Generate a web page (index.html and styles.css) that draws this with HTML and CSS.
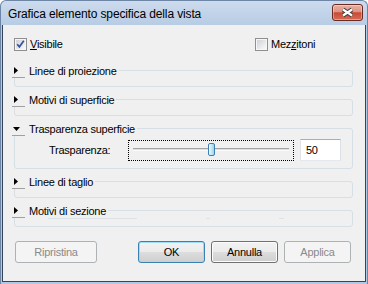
FILE: index.html
```html
<!DOCTYPE html>
<html lang="it">
<head>
    <meta charset="UTF-8">
    <meta name="viewport" content="width=device-width, initial-scale=1.0">
    <title>Grafica elemento specifica della vista</title>
    <link rel="stylesheet" href="styles.css">
</head>
<body>
<div class="window">
    <div class="titlebar">
        <span class="title">Grafica elemento specifica della vista</span>
        <button class="close">
            <svg width="29" height="15" viewBox="0 0 29 15">
                <path d="M10 4.5L19 10.5M19 4.5L10 10.5" stroke="#3b3b3b" stroke-width="4.2" fill="none"/>
                <path d="M10 4.5L19 10.5M19 4.5L10 10.5" stroke="#fff" stroke-width="2.2" fill="none"/>
            </svg>
        </button>
    </div>

    <div class="client">
        <div class="checks">
            <label class="chk">
                <span class="box"><svg width="11" height="11" viewBox="0 0 11 11"><path d="M2.2 5.2L4.4 7.8L8.8 1.8" stroke="#34519a" stroke-width="1.7" fill="none"/></svg></span>
                <span><u>V</u>isibile</span>
            </label>
            <label class="chk">
                <span class="box"></span>
                <span>Mez<u>z</u>itoni</span>
            </label>
        </div>

        <div class="group first">
            <div class="head">
                <span class="toggle"><svg width="4" height="7" viewBox="0 0 4 7"><path d="M0 0L4 3.5L0 7Z"/></svg></span>
                <span class="cap">Linee di proiezione</span>
            </div>
        </div>

        <div class="group">
            <div class="head">
                <span class="toggle"><svg width="4" height="7" viewBox="0 0 4 7"><path d="M0 0L4 3.5L0 7Z"/></svg></span>
                <span class="cap">Motivi di superficie</span>
            </div>
        </div>

        <div class="group open">
            <div class="head">
                <span class="toggle"><svg width="7" height="4" viewBox="0 0 7 4"><path d="M0 0H7L3.5 4Z"/></svg></span>
                <span class="cap">Trasparenza superficie</span>
            </div>
            <div class="row">
                <span class="lbl">Trasparenza:</span>
                <div class="slider">
                    <div class="track"></div>
                    <div class="thumb" style="left: 50%"></div>
                </div>
                <div class="num">50</div>
            </div>
        </div>

        <div class="group">
            <div class="head">
                <span class="toggle"><svg width="4" height="7" viewBox="0 0 4 7"><path d="M0 0L4 3.5L0 7Z"/></svg></span>
                <span class="cap">Linee di taglio</span>
            </div>
        </div>

        <div class="group last">
            <div class="head">
                <span class="toggle"><svg width="4" height="7" viewBox="0 0 4 7"><path d="M0 0L4 3.5L0 7Z"/></svg></span>
                <span class="cap">Motivi di sezione</span>
            </div>
            <div class="ghost">
                <span class="g1"></span>
                <span class="g2"></span>
                <span class="g3"></span>
            </div>
        </div>

        <div class="buttons">
            <button class="btn wide" disabled>Ripristina</button>
            <button class="btn default">OK</button>
            <button class="btn">Annulla</button>
            <button class="btn" disabled>Applica</button>
        </div>
    </div>
</div>
</body>
</html>
```

FILE: styles.css
```css
* {
    box-sizing: border-box;
}

body {
    margin: 0;
    background: #fff;
    font-family: "Liberation Sans", Arial, sans-serif;
    font-size: 11px;
    letter-spacing: -0.25px;
    color: #000;
}

.window {
    width: 368px;
    height: 284px;
    border: 1px solid #6d86a6;
    border-bottom: 0;
    border-radius: 6px 6px 0 0;
    background: linear-gradient(#cddbed, #b7cce5 24px, #b1c9e4);
    display: flex;
    flex-direction: column;
    overflow: hidden;
}

.titlebar {
    height: 24px;
    display: flex;
    justify-content: space-between;
    align-items: flex-start;
    padding: 0 4px 0 7px;
}

.title {
    font-size: 12px;
    line-height: 15px;
    letter-spacing: -0.13px;
    margin-top: 6px;
}

.close {
    width: 31px;
    height: 17px;
    margin-top: 3px;
    padding: 0;
    display: flex;
    border: 1px solid #6b2a22;
    border-radius: 3px;
    background: linear-gradient(#e9b1a4, #dc9383 45%, #c74b35 52%, #d56c57);
    box-shadow: inset 0 0 0 1px rgba(255, 255, 255, .35);
}

.client {
    margin: 0 1px 2px;
    height: 257px;
    border: 1px solid #33445c;
    border-top: 0;
    background: #f0f0f0;
    padding: 12px 12px 0 11px;
}

/* checkbox */
.checks {
    display: grid;
    grid-template-columns: 241px auto;
    height: 14px;
}

.chk {
    display: flex;
    align-items: center;
    gap: 3px;
    line-height: 14px;
}

.box {
    width: 13px;
    height: 13px;
    display: flex;
    border: 1px solid #8f8f8f;
    background: linear-gradient(135deg, #c9cdd3, #f7f7f7 85%);
    box-shadow: inset 0 0 0 1px #f6f6f6;
}

u {
    text-decoration: underline;
    text-underline-offset: 1px;
}

/* gruppi */
.group {
    border: 1px solid #d5dfe5;
    border-radius: 3px;
    margin-top: 12px;
    padding-bottom: 8px;
}

.group.first {
    margin-top: 19px;
}

.group.open {
    padding-bottom: 7px;
}

.group.last {
    padding-bottom: 7px;
}

.head {
    display: flex;
    height: 14px;
    margin: -7px 0 0 -3px;
}

.toggle {
    width: 13px;
    height: 14px;
    display: flex;
    align-items: center;
    padding-left: 2px;
    background: #f0f0f0;
    border-bottom: 1px solid #a0a0a0;
}

.open .toggle {
    padding-left: 1px;
}

.cap {
    background: #f0f0f0;
    line-height: 14px;
    padding: 0 2px 0 4px;
}

.row {
    display: flex;
    align-items: center;
    height: 22px;
    margin-top: 3px;
    padding-left: 34px;
}

.lbl {
    width: 79px;
}

.slider {
    position: relative;
    width: 166px;
    height: 21px;
    align-self: flex-end;
    border: 1px dotted #000;
    padding: 7px 4px 0;
}

.track {
    height: 3px;
    border-top: 1px solid #a3a3a3;
    border-bottom: 1px solid #fbfbfb;
    background: #dedede;
}

.thumb {
    position: absolute;
    top: 2px;
    width: 7px;
    height: 13px;
    margin-left: -3px;
    border: 1px solid #3c7fb1;
    border-radius: 2px;
    background: linear-gradient(to right, #f4fafe, #c6e6f7 50%, #9fd2ee);
}

.num {
    width: 41px;
    height: 22px;
    margin-left: 6px;
    background: #fff;
    border: 1px solid;
    border-color: #abadb3 #dbdfe6 #e3e9ef #e2e3ea;
    padding-left: 5px;
    line-height: 20px;
}

.ghost {
    display: flex;
    height: 1px;
}

.ghost span {
    background: #dbe3e9;
}

.g1 {
    margin-left: 33px;
    width: 89px;
}

.g2 {
    margin-left: 69px;
    width: 4px;
}

.g3 {
    margin-left: 69px;
    width: 5px;
}

/* pulsanti */
.buttons {
    display: flex;
    gap: 6px;
    margin-top: 14px;
    padding: 0 2px 0 1px;
}

.btn {
    width: 67px;
    height: 22px;
    padding: 0;
    font: inherit;
    letter-spacing: inherit;
    color: #000;
    border: 1px solid #707070;
    border-radius: 3px;
    background: linear-gradient(#f2f2f2, #ebebeb 50%, #dddddd 50%, #cfcfcf);
    box-shadow: inset 0 0 0 1px #fcfcfc;
}

.btn.wide {
    width: 82px;
    margin-right: auto;
}

.btn.default {
    border-color: #3c7fb1;
    box-shadow: inset 0 0 0 1px #9edcf8;
}

.btn:disabled {
    color: #8a8a8a;
    border-color: #adb2b5;
    background: #f4f4f4;
    box-shadow: none;
}
```
